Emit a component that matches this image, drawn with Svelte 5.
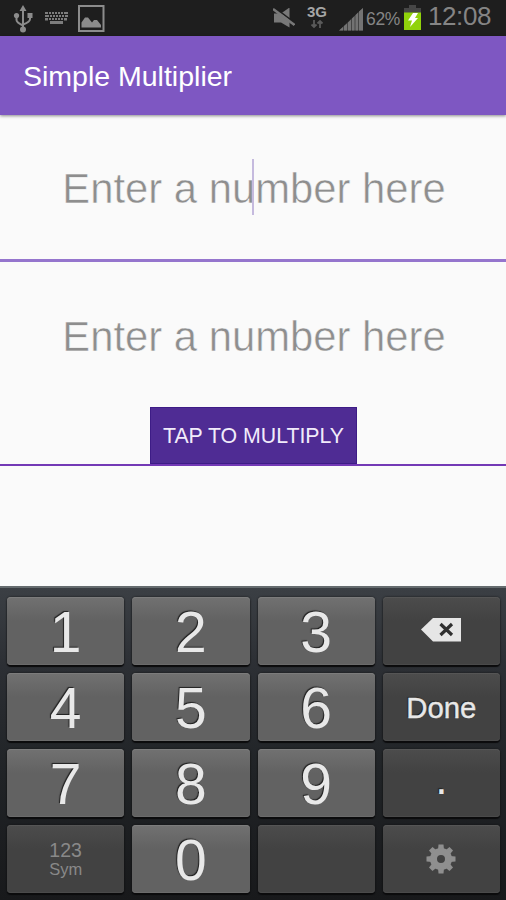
<script>
	const keys = [
		{ label: '1' },
		{ label: '2' },
		{ label: '3' },
		{ icon: 'delete', dark: true },
		{ label: '4' },
		{ label: '5' },
		{ label: '6' },
		{ label: 'Done', dark: true, size: 'done' },
		{ label: '7' },
		{ label: '8' },
		{ label: '9' },
		{ label: '.', dark: true, size: 'dot' },
		{ label: '123', sub: 'Sym', dark: true },
		{ label: '0' },
		{ label: '', dark: true },
		{ icon: 'gear', dark: true }
	];

	const teeth = [0, 45, 90, 135, 180, 225, 270, 315];
</script>

<div class="screen">
	<div class="status">
		<svg class="usb" width="20" height="28" viewBox="0 0 20 28">
			<g fill="none" stroke="#8c8c8c" stroke-width="2">
				<path d="M10 5V24M3.500 11V15Q3.500 17.500 10 20.500M17 11V14Q17 17 10 19.500" />
			</g>
			<path d="M10 0L13.500 6H6.500ZM14.500 8H19.500V13H14.500Z" fill="#8c8c8c" />
			<circle cx="3.500" cy="10.500" r="2.600" fill="#8c8c8c" />
			<circle cx="10" cy="24.500" r="3" fill="#8c8c8c" />
		</svg>
		<svg class="ime" width="26" height="14" viewBox="0 0 26 14" fill="#7d7d7d">
			<path
				d="M1 1h3v2H1zM5 1h2v2H5zM8 1h2v2H8zM11 1h2v2h-2zM14 1h2v2h-2zM17 1h2v2h-2zM20 1h4v2h-4zM1 4h4v2H1zM6 4h2v2H6zM9 4h2v2H9zM12 4h2v2h-2zM15 4h2v2h-2zM18 4h2v2h-2zM21 4h3v2h-3zM1 7h3v2.500H1zM5 7h2v2H5zM8 7h2v2H8zM11 7h2v2h-2zM14 7h2v2h-2zM17 7h2v2h-2zM20 7h3v2.500h-3zM6 10h13v3H6z"
			/>
		</svg>
		<svg class="picture" width="27" height="27" viewBox="0 0 27 27">
			<rect x="1" y="1" width="24.500" height="25" fill="none" stroke="#8c8c8c" stroke-width="2" />
			<path d="M3.500 22.500V17.500L7 12.500H10L14 17.500L16 15H19L23 20V22.500Z" fill="#8c8c8c" />
		</svg>
		<span class="spacer"></span>
		<svg class="mute" width="22" height="20" viewBox="0 0 22 20">
			<path d="M1 5.500H8L16.500 -0.500V19.500L8 14.500H1Z" fill="#787878" />
			<path d="M1 -0.800L22 15" stroke="#1e1e1e" stroke-width="1.600" />
			<path d="M0 1L21.500 17" stroke="#787878" stroke-width="2.600" />
		</svg>
		<div class="network">
			<span>3G</span>
			<svg width="14" height="9" viewBox="0 0 14 9">
				<path
					d="M4 0V7M1.500 4.500L4 7L6.500 4.500M10 8V1M7.500 3.500L10 1L12.500 3.500"
					fill="none"
					stroke="#5a5a5a"
					stroke-width="1.800"
				/>
			</svg>
		</div>
		<svg class="signal" width="24" height="23" viewBox="0 0 24 23" fill="#747474">
			<path
				d="M0 22.500L4 19V22.500ZM5 18L8 15.500V22.500H5ZM9 14.500L12 11.500V22.500H9ZM13 10.500L15.500 8V22.500H13ZM16.500 7L19 4.500V22.500H16.500ZM20 3.500L24 0V22.500H20Z"
			/>
			<path d="M0 22.500L24 0V22.500Z" opacity="0.45" />
		</svg>
		<span class="percent">62%</span>
		<svg class="battery" width="17" height="25" viewBox="0 0 17 25">
			<path d="M5 0H12V3H17V8H0V3H5Z" fill="#464646" />
			<rect y="7.500" width="17" height="17.500" fill="#90d20b" />
			<path d="M9 8H14L11 13H14L6 22L8 15.500H4Z" fill="#fff" />
		</svg>
		<span class="clock">12:08</span>
	</div>

	<header>Simple Multiplier</header>

	<main>
		<div class="field first">
			<span>Enter a number here</span>
			<i class="caret"></i>
		</div>
		<div class="field second">
			<span>Enter a number here</span>
		</div>
		<div class="action">
			<button class="multiply">TAP TO MULTIPLY</button>
		</div>
	</main>

	<div class="keyboard">
		{#each keys as key}
			<button class="key {key.size ?? ''}" class:dark={key.dark} class:symbols={key.sub}>
				{#if key.icon === 'delete'}
					<svg class="delete" width="41" height="25" viewBox="0 0 41 25">
						<path d="M0 12.500L12 1H40V24.500H12Z" fill="#e6e6e6" />
						<path d="M19.500 7L31 18M31 7L19.500 18" stroke="#303030" stroke-width="3.200" />
					</svg>
				{:else if key.icon === 'gear'}
					<svg width="30" height="30" viewBox="-15 -15 30 30">
						{#each teeth as angle}
							<path d="M-3 -9L-2.500 -14.500H2.500L3 -9Z" fill="#8f8f8f" transform="rotate({angle})" />
						{/each}
						<circle r="7.500" fill="none" stroke="#8f8f8f" stroke-width="7" />
					</svg>
				{:else}
					<span>{key.label}</span>
					{#if key.sub}
						<span class="sub">{key.sub}</span>
					{/if}
				{/if}
			</button>
		{/each}
	</div>
</div>

<style>
	:global(body) {
		margin: 0;
	}

	.screen {
		display: flex;
		flex-direction: column;
		width: 506px;
		height: 900px;
		overflow: hidden;
		background: #fafafa;
		font-family: 'Liberation Sans', Arial, sans-serif;
	}

	.status {
		display: flex;
		align-items: flex-start;
		box-sizing: border-box;
		height: 36px;
		padding: 5px 15px 0 13px;
		background: #1e1e1e;
		color: #858585;
	}

	.status svg {
		flex-shrink: 0;
	}

	.ime {
		margin: 6px 0 0 11px;
	}

	.picture {
		margin-left: 8px;
	}

	.spacer {
		flex: 1;
	}

	.mute {
		margin-top: 3px;
	}

	.network {
		display: flex;
		flex-direction: column;
		align-items: center;
		width: 24px;
		margin: -1px 10px 0 10px;
		font-size: 15px;
		font-weight: 700;
		line-height: 16px;
		color: #a5a5a5;
	}

	.signal {
		margin-top: 3px;
	}

	.percent {
		width: 36px;
		margin: 4px 2px 0 3px;
		font-size: 17.500px;
		letter-spacing: -0.3px;
		line-height: 20px;
	}

	.clock {
		margin: -4px 0 0 7px;
		font-size: 26px;
		line-height: 30px;
		letter-spacing: -0.4px;
		width: 63px;
	}

	header {
		position: relative;
		box-sizing: border-box;
		height: 79px;
		padding-left: 23px;
		background: #7e57c2;
		box-shadow: 0 1px 3px rgba(0, 0, 0, 0.45);
		color: #fff;
		font-size: 28.500px;
		line-height: 80px;
	}

	main {
		display: flex;
		flex-direction: column;
		height: 471px;
	}

	.field {
		position: relative;
		box-sizing: border-box;
		padding-left: 2px;
		color: #8e8e8e;
		font-size: 41.800px;
		line-height: 56px;
		text-align: center;
		white-space: nowrap;
		/* thins the strokes towards a light weight */
		-webkit-text-stroke: 0.5px #fafafa;
	}

	.first {
		height: 147px;
		padding-top: 46px;
		border-bottom: 3px solid #9575cd;
	}

	.second {
		height: 145px;
		padding-top: 47px;
	}

	/* text cursor sits over the hint */
	.caret {
		position: absolute;
		top: 44px;
		left: 252px;
		width: 2px;
		height: 56px;
		background: #c5bade;
	}

	.action {
		display: flex;
		justify-content: center;
		border-bottom: 2px solid #7339b5;
	}

	.multiply {
		width: 207px;
		height: 57px;
		padding: 2px 0 0 1px;
		border: 1px solid #3d1c86;
		background: #4f2c94;
		color: #f1ebfa;
		font-family: inherit;
		font-size: 21.300px;
		line-height: 53px;
		white-space: nowrap;
	}

	.keyboard {
		display: grid;
		grid-template-columns: repeat(4, 1fr);
		grid-template-rows: repeat(4, 68px);
		gap: 8px;
		box-sizing: border-box;
		height: 314px;
		padding: 9px 6px 7px 7px;
		border-top: 2px solid #656b6e;
		background: linear-gradient(#3b3f44, #2c2f34 25%, #202326 60%, #18191b);
	}

	.key {
		display: flex;
		flex-direction: column;
		align-items: center;
		justify-content: center;
		min-width: 0;
		padding: 0;
		border: 0;
		border-radius: 4px;
		background: linear-gradient(#717171, #626262 35%, #626262);
		box-shadow:
			inset 0 1px #7c7c7c,
			inset 0 -1px #6b6b6b,
			0 2px 1px #0b0b0c,
			0 0 2px #111;
		color: #e8e8e8;
		font-family: inherit;
		font-size: 57px;
		line-height: 66px;
		text-shadow: -1px -1px 1px #202020;
	}

	.key span {
		margin-top: 2px;
	}

	.dark {
		background: linear-gradient(#4c4c4c, #424242 35%, #424242);
		box-shadow:
			inset 0 1px #555,
			inset 0 -1px #4a4a4a,
			0 2px 1px #0b0b0c,
			0 0 2px #111;
	}

	.done {
		font-size: 29.300px;
		-webkit-text-stroke: 0.4px #e8e8e8;
	}

	.dot {
		padding-bottom: 10px;
		font-size: 44px;
	}

	.symbols {
		color: #898989;
		font-size: 19.500px;
		text-shadow: none;
	}

	.symbols span {
		margin-top: 0;
		line-height: 21px;
	}

	.symbols .sub {
		margin-top: -1px;
		font-size: 16.500px;
		line-height: 19px;
	}

	.delete {
		margin-top: -4px;
	}
</style>
